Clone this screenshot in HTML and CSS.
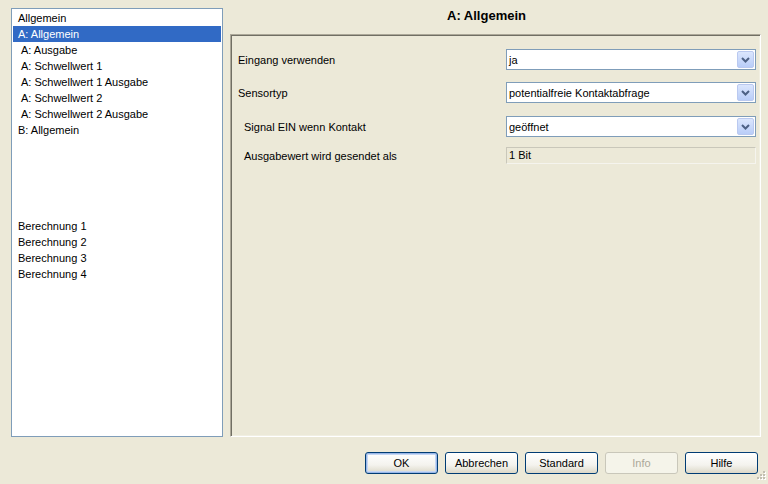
FILE: index.html
```html
<!DOCTYPE html>
<html lang="de">
<head>
<meta charset="utf-8">
<title>A: Allgemein</title>
<link rel="stylesheet" href="styles.css">
</head>
<body>
<div class="window">
  <div class="main">
    <ul class="tree">
      <li class="item">Allgemein</li>
      <li class="item selected">A: Allgemein</li>
      <li class="item sub">A: Ausgabe</li>
      <li class="item sub">A: Schwellwert 1</li>
      <li class="item sub">A: Schwellwert 1 Ausgabe</li>
      <li class="item sub">A: Schwellwert 2</li>
      <li class="item sub">A: Schwellwert 2 Ausgabe</li>
      <li class="item">B: Allgemein</li>
      <li class="item empty"></li>
      <li class="item empty"></li>
      <li class="item empty"></li>
      <li class="item empty"></li>
      <li class="item empty"></li>
      <li class="item">Berechnung 1</li>
      <li class="item">Berechnung 2</li>
      <li class="item">Berechnung 3</li>
      <li class="item">Berechnung 4</li>
    </ul>
    <section class="page">
      <h1 class="title">A: Allgemein</h1>
      <div class="frame">
        <div class="params">
          <div class="label">Eingang verwenden</div>
          <div class="select"><span class="value">ja</span><span class="arrow"><svg width="9" height="6" viewBox="0 0 9 6"><path d="M1 1 L4.5 4.5 L8 1" fill="none" stroke="#4d6185" stroke-width="2"/></svg></span></div>

          <div class="label">Sensortyp</div>
          <div class="select"><span class="value">potentialfreie Kontaktabfrage</span><span class="arrow"><svg width="9" height="6" viewBox="0 0 9 6"><path d="M1 1 L4.5 4.5 L8 1" fill="none" stroke="#4d6185" stroke-width="2"/></svg></span></div>

          <div class="label indent">Signal EIN wenn Kontakt</div>
          <div class="select r3"><span class="value">geöffnet</span><span class="arrow"><svg width="9" height="6" viewBox="0 0 9 6"><path d="M1 1 L4.5 4.5 L8 1" fill="none" stroke="#4d6185" stroke-width="2"/></svg></span></div>

          <div class="label indent r4">Ausgabewert wird gesendet als</div>
          <div class="readonly r4">1 Bit</div>
        </div>
      </div>
    </section>
  </div>
  <div class="buttons">
    <button class="btn default">OK</button>
    <button class="btn">Abbrechen</button>
    <button class="btn">Standard</button>
    <button class="btn" disabled>Info</button>
    <button class="btn">Hilfe</button>
  </div>
  <svg class="grip" width="12" height="12" viewBox="0 0 12 12">
    <g fill="#fff">
      <rect x="9" y="1" width="2" height="2"/>
      <rect x="6" y="4" width="2" height="2"/><rect x="9" y="4" width="2" height="2"/>
      <rect x="3" y="7" width="2" height="2"/><rect x="6" y="7" width="2" height="2"/><rect x="9" y="7" width="2" height="2"/>
    </g>
    <g fill="#c2bfb1">
      <rect x="8" y="0" width="2" height="2"/>
      <rect x="5" y="3" width="2" height="2"/><rect x="8" y="3" width="2" height="2"/>
      <rect x="2" y="6" width="2" height="2"/><rect x="5" y="6" width="2" height="2"/><rect x="8" y="6" width="2" height="2"/>
    </g>
  </svg>
</div>
</body>
</html>
```
FILE: styles.css
```css
* { box-sizing: border-box; }
html, body {
  margin: 0;
  padding: 0;
  width: 768px;
  height: 484px;
  overflow: hidden;
  background: #ece9d8;
  font-family: "Liberation Sans", Arial, sans-serif;
  font-size: 11px;
  color: #000;
}
.window {
  position: relative;
  width: 768px;
  height: 484px;
}
.main {
  display: flex;
  padding: 8px 0 0 11px;
}
.tree {
  list-style: none;
  margin: 0;
  padding: 1px 1px;
  width: 212px;
  height: 429px;
  background: #fff;
  border: 1px solid #7f9db9;
}
.item {
  height: 16px;
  line-height: 17px;
  padding-left: 5px;
  white-space: nowrap;
}
.item.sub { padding-left: 8px; }
.item.selected {
  background: #316ac5;
  color: #fff;
}
.page {
  margin-left: 7px;
  width: 531px;
  display: flex;
  flex-direction: column;
}
.title {
  margin: 0;
  height: 26px;
  line-height: 16px;
  font-size: 13px;
  font-weight: bold;
  text-align: center;
  padding-right: 18px;
}
.frame {
  height: 403px;
  border-top: 1px solid #aca899;
  border-left: 1px solid #aca899;
  border-right: 1px solid #fff;
  border-bottom: 1px solid #fff;
  box-shadow: inset 1px 1px 0 #716f64, inset -1px -1px 0 #f1efe2;
  padding: 14px 3px 0 7px;
}
.params {
  display: grid;
  grid-template-columns: 268px 250px;
  row-gap: 12px;
  align-items: center;
}
.label {
  white-space: nowrap;
  padding-top: 1px;
}
.label.indent { padding-left: 6px; }
.r3 { margin-top: 1px; }
.r4 { margin-top: -2px; }
.select {
  height: 21px;
  background: #fff;
  border: 1px solid #7f9db9;
  display: flex;
  align-items: center;
  justify-content: space-between;
  padding: 1px 1px 1px 2px;
}
.select .value {
  white-space: nowrap;
  padding-top: 1px;
}
.arrow {
  width: 17px;
  height: 17px;
  border: 1px solid #bac9f0;
  border-radius: 2px;
  background: linear-gradient(#dbe6fd, #b9cdf8);
  display: flex;
  align-items: center;
  justify-content: center;
}
.readonly {
  height: 17px;
  border: 1px solid #c9c7ba;
  border-right-color: #f5f4ee;
  border-bottom-color: #f5f4ee;
  padding: 0 2px;
  line-height: 14px;
  align-self: start;
}
.buttons {
  display: flex;
  justify-content: flex-end;
  gap: 7px;
  padding: 15px 10px 0 0;
}
.btn {
  width: 73px;
  height: 22px;
  font-family: inherit;
  font-size: 11px;
  color: #000;
  border: 1px solid #003c74;
  border-radius: 3px;
  background: linear-gradient(#ffffff, #f4f3ee 60%, #dcd8c8);
  padding: 0;
}
.btn.default {
  box-shadow: inset 0 0 0 1px #99b7e8, inset 0 0 0 2px #c6d7f3;
}
.btn:disabled {
  color: #aca899;
  border-color: #c9c7ba;
  background: #f5f4ea;
}
.grip {
  position: absolute;
  right: 1px;
  bottom: 1px;
}
```
